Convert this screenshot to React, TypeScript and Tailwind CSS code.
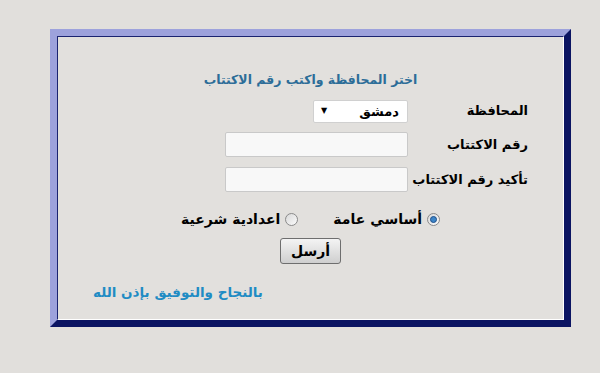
import React, { useState } from 'react';

const arabic = { fontFamily: '"DejaVu Sans", "Noto Sans", sans-serif' };

const Radio: React.FC<{ checked: boolean; onClick: () => void }> = ({ checked, onClick }) => (
  <span
    onClick={onClick}
    className="flex h-[13px] w-[13px] items-center justify-center rounded-full border border-[#8a8a8a] bg-gradient-to-br from-[#d8d8d8] to-[#fbfbfb]"
  >
    {checked && <span className="h-[7px] w-[7px] rounded-full border border-[#1f4f8a] bg-[#3d86c8]" />}
  </span>
);

const App: React.FC = () => {
  const [city, setCity] = useState('دمشق');
  const [num, setNum] = useState('');
  const [confirmNum, setConfirmNum] = useState('');
  const [kind, setKind] = useState<'general' | 'sharia'>('general');

  return (
    <div className="min-h-screen w-full bg-[#e1dfdc] pl-[50px] pt-[29px]" style={arabic}>
      <div className="h-[298px] w-[521px] border-[7px] border-b-[#0b1462] border-l-[#9da2dc] border-r-[#0b1462] border-t-[#9da2dc]">
        <div
          dir="rtl"
          className="flex h-full flex-col border border-b-white border-l-[#1b2470] border-r-white border-t-[#1b2470] bg-[#e2e0dd]"
        >
          <p className="mt-[35px] text-center text-[12.5px] font-bold leading-[16px] text-[#2c6d98]">
            اختر المحافظة واكتب رقم الاكتتاب
          </p>

          <div className="mt-[11px] grid grid-cols-[120px_auto] items-center gap-y-[10px] pr-[35px]">
            <label className="whitespace-nowrap text-[13px] font-bold leading-[18px] text-black">المحافظة</label>
            <div className="relative h-[23px] w-[95px]">
              <select
                value={city}
                onChange={(e) => setCity(e.target.value)}
                className="h-full w-full appearance-none rounded-[2px] border border-[#d0d0d0] bg-white pr-[8px] text-[13px] font-bold text-black outline-none"
              >
                <option>دمشق</option>
                <option>حلب</option>
                <option>حمص</option>
              </select>
              <span className="pointer-events-none absolute left-[8px] top-[7px] text-[8px] leading-[10px] text-black">▼</span>
            </div>

            <label className="whitespace-nowrap text-[13px] font-bold leading-[18px] text-black">رقم الاكتتاب</label>
            <input
              value={num}
              onChange={(e) => setNum(e.target.value)}
              className="h-[25px] w-[183px] rounded-[2px] border border-[#c9c9c9] bg-[#f8f8f8] outline-none"
            />

            <label className="whitespace-nowrap text-[13px] font-bold leading-[18px] text-black">تأكيد رقم الاكتتاب</label>
            <input
              value={confirmNum}
              onChange={(e) => setConfirmNum(e.target.value)}
              className="h-[25px] w-[183px] rounded-[2px] border border-[#c9c9c9] bg-[#f8f8f8] outline-none"
            />
          </div>

          <div className="mt-[18px] flex items-center justify-center gap-[5px] text-[14px] font-bold leading-[18px] text-black">
            <Radio checked={kind === 'general'} onClick={() => setKind('general')} />
            <span className="ml-[30px]">أساسي عامة</span>
            <Radio checked={kind === 'sharia'} onClick={() => setKind('sharia')} />
            <span>اعدادية شرعية</span>
          </div>

          <div className="mt-[10px] flex justify-center">
            <button className="h-[26px] w-[61px] rounded-[3px] border border-[#6e6e6e] bg-gradient-to-b from-[#f4f4f4] to-[#cfcfcf] text-[14px] font-bold text-black">
              أرسل
            </button>
          </div>

          <p className="ml-[35px] mt-[18px] self-end text-[13.5px] font-bold leading-[20px] text-[#1f8cc4]">
            بالنجاح والتوفيق بإذن الله
          </p>
        </div>
      </div>
    </div>
  );
};

export default App;
